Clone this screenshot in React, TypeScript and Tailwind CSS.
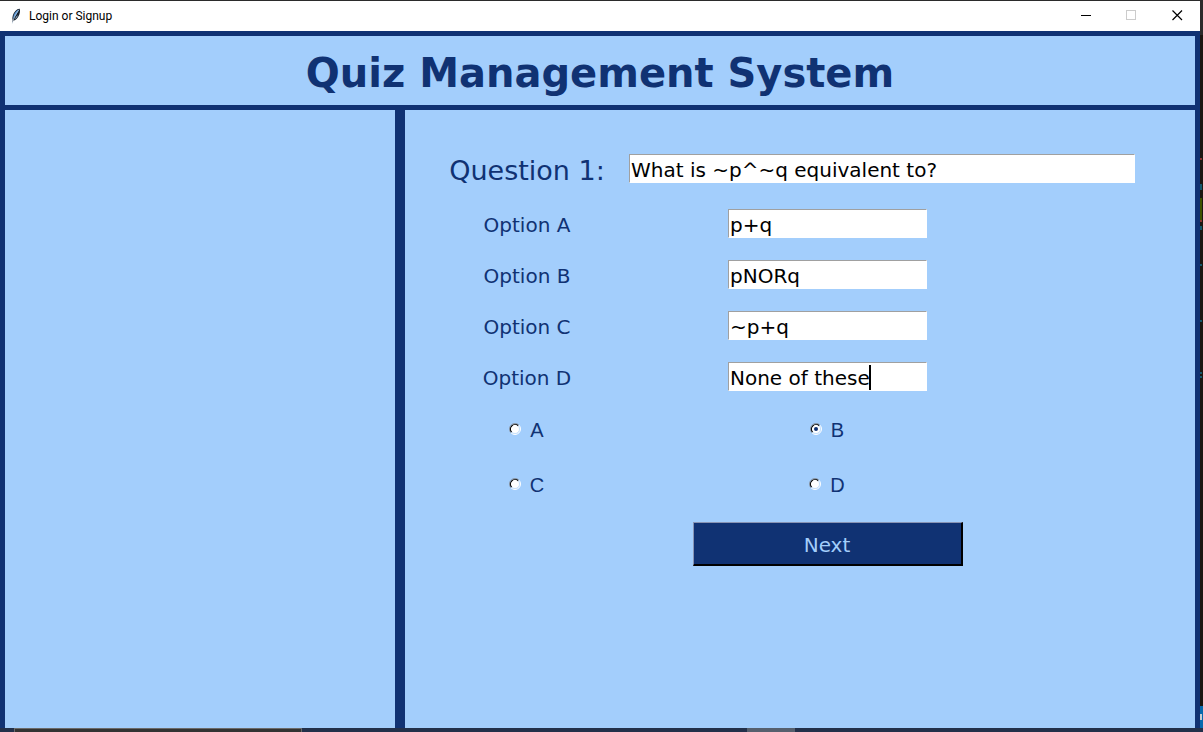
import { useState } from "react";
import type { ReactNode } from "react";

const LETTERS = ["A", "B", "C", "D"] as const;
type Letter = (typeof LETTERS)[number];

const entryStyle =
  "block h-[29px] w-full rounded-none border border-t-[#a0a0a0] border-l-[#a0a0a0] border-r-white border-b-white bg-white px-px pt-[2px] text-xl leading-[25px] text-black outline-none";

function Feather() {
  return (
    <svg className="h-4 w-4" viewBox="0 0 16 16" aria-hidden="true">
      <path d="M4 15.5 4.6 12C3.8 9.5 5 5.5 7.4 3 9 1.300 10.600.5 11.600.7c.9 1.800.4 5-1.200 7.800C9.200 10.800 7.500 12.400 5.400 12.500z" fill="#17202c" />
      <path d="M5.300 11C5 8.500 6.200 5.500 8 3.600 9 2.500 10 1.700 10.800 1.500 10.500 3.500 8.500 6 7 8.500z" fill="#5b97d4" />
      <path d="M6.600 11.300c1.500-.7 2.800-2.300 3.600-4.200L8.400 8.400z" fill="#9fc4e6" />
      <path d="M4.300 15.500C5.200 11 7.400 6.500 10.800 2" fill="none" stroke="#d5e6f5" strokeWidth=".6" />
    </svg>
  );
}

function WindowButton({ label, disabled, children }: { label: string; disabled?: boolean; children: ReactNode }) {
  return (
    <button type="button" aria-label={label} disabled={disabled} className="flex h-full w-[46px] items-center justify-center">
      <svg className="h-[11px] w-[11px]" viewBox="0 0 11 11" fill="none" shapeRendering="crispEdges" aria-hidden="true">
        {children}
      </svg>
    </button>
  );
}

function TitleBar() {
  return (
    <div className="flex h-[30px] items-center bg-white">
      <div className="flex flex-1 items-center gap-[5px] pl-2">
        <Feather />
        <span className="font-[Roboto,sans-serif] text-xs leading-4 text-black">Login or Signup</span>
      </div>
      <div className="flex h-full pb-[2px]">
        <WindowButton label="Minimize">
          <path d="M1 5.500h10" stroke="#000" />
        </WindowButton>
        <WindowButton label="Maximize" disabled>
          <path d="M.5.5h9v9h-9z" stroke="#ccc" />
        </WindowButton>
        <WindowButton label="Close">
          <path d="M.5.5l9.500 9.500M10 .5L.5 10" stroke="#000" strokeWidth="1.200" shapeRendering="auto" />
        </WindowButton>
      </div>
    </div>
  );
}

function RadioDial({ selected }: { selected: boolean }) {
  return (
    <svg className="mb-[2px] h-3 w-3" viewBox="0 0 12 12" aria-hidden="true">
      <circle cx="6" cy="6" r="5" fill="#fff" />
      <path d="M2.100 9.900A5.500 5.500 0 0 1 9.900 2.100" fill="none" stroke="#8894a4" />
      <path d="M2.700 9.200A4.600 4.600 0 0 1 9.200 2.700" fill="none" stroke="#000" strokeWidth="1.200" />
      <path d="M9.900 2.100A5.500 5.500 0 0 1 2.100 9.900" fill="none" stroke="#fff" />
      <path d="M9.200 2.800A4.500 4.500 0 0 1 2.800 9.200" fill="none" stroke="#c4e0fc" />
      {selected && <circle cx="6" cy="6" r="2" fill="#103273" />}
    </svg>
  );
}

function Choice({ letter, selected, onSelect }: { letter: Letter; selected: boolean; onSelect: () => void }) {
  return (
    <label className="relative flex items-center gap-[9px] pr-px font-['Liberation_Sans',sans-serif] text-xl leading-[30px]">
      <input type="radio" name="answer" value={letter} checked={selected} onChange={onSelect} className="absolute h-3 w-3 opacity-0" />
      <RadioDial selected={selected} />
      {letter}
    </label>
  );
}

function QuestionForm() {
  const [question, setQuestion] = useState("What is ~p^~q equivalent to?");
  const [options, setOptions] = useState<Record<Letter, string>>({
    A: "p+q",
    B: "pNORq",
    C: "~p+q",
    D: "None of these",
  });
  const [answer, setAnswer] = useState<Letter>("B");

  return (
    <form className="grid grid-cols-[158px_minmax(0,397fr)_minmax(0,86fr)] gap-x-[23px] pt-11 pr-[60px] pl-[43px]">
      <label htmlFor="question" className="flex h-[29px] items-center justify-center pt-1 text-[27px] leading-8 whitespace-nowrap">
        Question 1:
      </label>
      <input id="question" className={`${entryStyle} col-span-2`} value={question} onChange={(e) => setQuestion(e.target.value)} />

      <div className="col-span-2 mt-[26px] grid grid-cols-[158px_1fr] gap-x-[23px] gap-y-[22px]">
        {LETTERS.map((letter) => (
          <div key={letter} className="col-span-2 grid grid-cols-subgrid items-center justify-items-center">
            <label htmlFor={`option-${letter}`} className="pt-1 text-xl leading-[25px]">
              Option {letter}
            </label>
            <div className="relative w-[199px]">
              <input
                id={`option-${letter}`}
                className={entryStyle}
                value={options[letter]}
                onChange={(e) => setOptions({ ...options, [letter]: e.target.value })}
              />
              {letter === "D" && <span className="absolute top-[3px] left-[141px] h-[25px] w-[2px] bg-black" />}
            </div>
          </div>
        ))}
      </div>

      <div
        role="radiogroup"
        aria-label="Answer"
        className="col-span-2 mt-6 grid grid-cols-[158px_1fr] justify-items-center gap-x-[23px] gap-y-[25px]"
      >
        {LETTERS.map((letter) => (
          <Choice key={letter} letter={letter} selected={answer === letter} onSelect={() => setAnswer(letter)} />
        ))}
      </div>

      <button
        type="button"
        className="col-span-2 mt-[22px] ml-[181px] h-11 w-[270px] justify-self-center border border-t-[#8894b4] border-r-2 border-b-2 border-l-[#8894b4] border-r-black border-b-black bg-[#103273] pt-[2px] text-xl text-[#a3cefc]"
      >
        Next
      </button>
    </form>
  );
}

function DesktopEdge() {
  return (
    <div className="flex w-[3px] flex-col bg-[#1b1611]">
      <div className="h-[35px] bg-[#2b2b2b]" />
      <div className="mt-[123px] h-[2px] w-[2px] bg-[#8a3431]" />
      <div className="mt-6 h-[6px] w-[2px] bg-[#14586c]" />
      <div className="mt-2 h-[22px] w-[2px] bg-[#3e5200]" />
      <div className="h-[2px] w-[2px] bg-[#8a3431]" />
      <div className="mt-1 h-1 w-[2px] bg-[#14586c]" />
      <div className="mt-[34px] h-[2px] w-[2px] bg-[#14586c]" />
      <div className="mt-[54px] h-[2px] w-[2px] bg-[#14586c]" />
      <div className="mt-[50px] h-[2px] w-[2px] bg-[#14586c]" />
      <div className="mt-[2px] h-[2px] w-[2px] bg-[#14586c]" />
      <div className="mt-auto flex h-[22px] flex-col justify-center bg-[#0769ad]">
        <div className="h-[6px] w-[2px] bg-[#c5ccd3]" />
      </div>
    </div>
  );
}

export default function App() {
  return (
    <div className="flex min-h-screen flex-col bg-[#22304a] font-['DejaVu_Sans',Verdana,sans-serif] text-[#103273]">
      <div className="flex flex-1">
        <div className="flex flex-1 flex-col border-t border-[#2b2b2b]">
          <TitleBar />
          <header className="flex h-[79px] items-center justify-center border-[5px] border-[#103273] bg-[#a3cefc] pt-1">
            <h1 className="text-[40px] leading-[48px] font-bold">Quiz Management System</h1>
          </header>
          <div className="flex flex-1">
            <aside className="w-1/3 border-x-[5px] border-[#103273] bg-[#a3cefc]" />
            <main className="w-2/3 border-x-[5px] border-[#103273] bg-[#a3cefc]">
              <QuestionForm />
            </main>
          </div>
        </div>
        <DesktopEdge />
      </div>
      <div className="flex h-1 bg-[#22304a]">
        <div className="ml-[14px] h-full w-[288px] border-x border-t border-[#6a6a6a] bg-[#333]" />
        <div className="ml-[445px] h-full w-12 bg-[#56606e]" />
      </div>
    </div>
  );
}
